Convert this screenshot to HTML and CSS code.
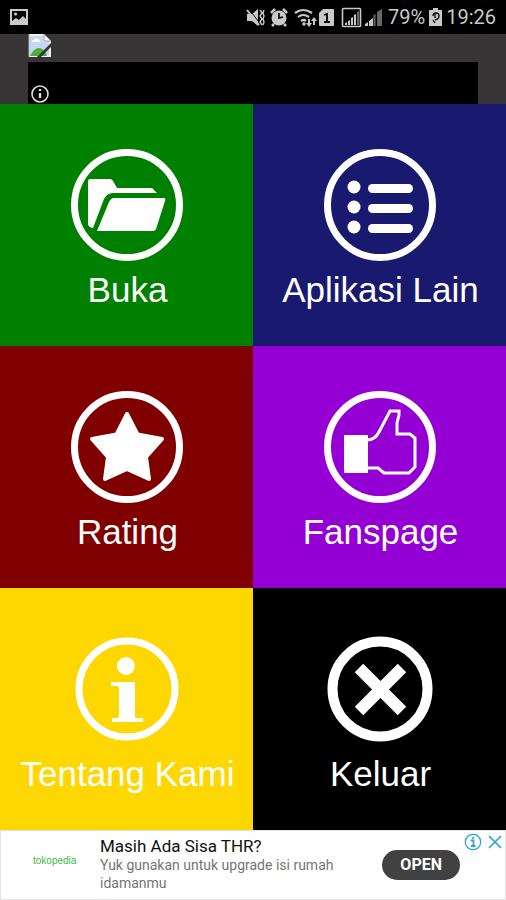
FILE: index.html
```html
<!DOCTYPE html>
<html lang="id">
<head>
<meta charset="utf-8">
<meta name="viewport" content="width=device-width, initial-scale=1">
<title>Menu</title>
<link rel="stylesheet" href="styles.css">
</head>
<body>
<div class="status">
  <svg class="status-photo" width="18" height="16" viewBox="0 0 18 16" aria-hidden="true">
    <rect x="1" y="1" width="16" height="14" fill="none" stroke="currentColor" stroke-width="2"/>
    <path d="M2 12l4-3 3 2 4-4 3 3v4H2z" fill="currentColor"/>
    <circle cx="5.500" cy="5" r="1.600" fill="currentColor"/>
  </svg>
  <div class="status-right">
    <svg width="138" height="34" viewBox="246 0 138 34" fill="currentColor" aria-hidden="true">
      <path d="M247 14h5l6-5v17l-6-5h-5z"/>
      <path d="M249 9l12 16" stroke="#000" stroke-width="1"/>
      <path d="M247 10l12 15" fill="none" stroke="currentColor" stroke-width="2"/>
      <path d="M260 10l2 3-2 3 2 3-2 3 2 3M264 10l-1 3 1 3-1 3 1 3-1 3" fill="none" stroke="currentColor" stroke-width="1.400"/>
      <circle cx="279" cy="18" r="7.500"/>
      <path d="M271 13l4-4M287 13l-4-4M274 24l-2 2M284 24l2 2" stroke="currentColor" stroke-width="2.500"/>
      <path d="M279 13v5l4-1" fill="none" stroke="#000" stroke-width="1.600"/>
      <g fill="none" stroke="currentColor" stroke-width="2.200">
        <path d="M295 13q8-6 17 0M298 17q5-4 11 0M301 21q3-2 5 0"/>
      </g>
      <circle cx="304" cy="24" r="1.800"/>
      <path d="M308 19h2v4h2l-3 4-3-4h2zM314 17l3 4h-2v4h-2v-4h-2z"/>
      <path d="M323 9h10q1 0 1 1v15q0 1-1 1h-13q-1 0-1-1V13z"/>
      <path d="M324 15l3-1v8M324 22h6" fill="none" stroke="#000" stroke-width="1.800"/>
      <rect x="342.500" y="8.500" width="18" height="18" rx="1" fill="none" stroke="currentColor" stroke-width="1.600"/>
      <path d="M345 23l2-1v3h-2zM348 21l2-1v5h-2zM351 18l2-1v8h-2zM354 15l2-1v11h-2z"/>
      <path d="M357 12l2-1v14h-2zM377 12l5-3v17h-5z" fill="#666"/>
      <path d="M365 24l3-2v4h-3zM369 21l4-3v8h-4z"/>
      <path d="M373.500 15l2-1v12h-2z" fill="#666"/>
    </svg>
    <span class="battery-text">79%</span>
    <svg class="battery" width="13" height="18" viewBox="0 0 13 18" aria-hidden="true">
      <path d="M4 0h5v2h4v16H0V2h4z" fill="currentColor"/>
      <path d="M4 8q0-3 3-3t3 3-4 4M4 12l2 3M6 6v4" fill="none" stroke="#000" stroke-width="1.300"/>
    </svg>
    <time class="clock">19:26</time>
  </div>
</div>

<header class="banner">
  <svg class="missing" width="24" height="23" viewBox="0 0 24 23" role="img" aria-label="Gambar">
    <path d="M1 0h15l7 7v16H1z" fill="#f1f1f1"/>
    <path d="M2 2h13v6h6v13H2z" fill="#c6d7f5"/>
    <path d="M4 8q0-2 2-2 1-3 3-1 3 0 3 3z" fill="#fff"/>
    <path d="M2 22q4-8 9-8t8 8z" fill="#4cae39"/>
    <path d="M16 0v7h7z" fill="#fff" stroke="#999"/>
    <path d="M24 8v4L13 23H9z" fill="#383536"/>
    <path d="M1 0v23" stroke="#aaa"/>
  </svg>
  <div class="slot">
    <svg width="18" height="18" viewBox="0 0 18 18" role="img" aria-label="Info">
      <circle cx="9" cy="9" r="8" fill="none" stroke="#ddd" stroke-width="1.600"/>
      <path d="M9 8v5M9 4v2" fill="none" stroke="#ddd" stroke-width="2.400"/>
    </svg>
  </div>
</header>

<main class="menu">
  <a class="tile tile-open" href="#buka">
    <svg class="icon" viewBox="0 0 112 112" aria-hidden="true">
      <circle class="ring" cx="56" cy="56" r="52.500"/>
      <path d="M19 30h20q2 0 3 2l4 7h34q2 0 3 2l3 3H42q-6 0-9 6L22 79q-5-1-5-4V33q0-3 2-3z"/>
      <path d="M43 49h50q2 0 1 3L85 80q-1 2-3 2H26l12-29q2-4 5-4z"/>
    </svg>
    <span class="label">Buka</span>
  </a>
  <a class="tile tile-apps" href="#aplikasi">
    <svg class="icon" viewBox="0 0 112 112" aria-hidden="true">
      <circle class="ring" cx="56" cy="56" r="52.500"/>
      <circle cx="30" cy="38" r="6.500"/><circle cx="30" cy="58" r="6.500"/><circle cx="30" cy="78" r="6.500"/>
      <rect x="44" y="35" width="45" height="9" rx="4.500"/>
      <rect x="44" y="55" width="45" height="9" rx="4.500"/>
      <rect x="44" y="75" width="45" height="9" rx="4.500"/>
    </svg>
    <span class="label">Aplikasi Lain</span>
  </a>
  <a class="tile tile-rating" href="#rating">
    <svg class="icon" viewBox="0 0 112 112" aria-hidden="true">
      <circle class="ring" cx="56" cy="56" r="52.500"/>
      <path d="M56 23l10.500 20.500L91 48 75 66l3 22-22-10-22 10 3-22-16-18 24.500-4.500z" stroke="currentColor" stroke-width="4" stroke-linejoin="round"/>
    </svg>
    <span class="label">Rating</span>
  </a>
  <a class="tile tile-fans" href="#fanspage">
    <svg class="icon" viewBox="0 0 112 112" aria-hidden="true">
      <circle class="ring" cx="56" cy="56" r="52.500"/>
      <path d="M20 44h24v38H20z"/>
      <path d="M43 49q8 0 12-8l11-21h9v4l-2 8v11h13l5 4v29l-6 6H60l-6-5H43" fill="none" stroke="currentColor" stroke-width="3"/>
    </svg>
    <span class="label">Fanspage</span>
  </a>
  <a class="tile tile-about" href="#tentang">
    <svg class="icon" viewBox="0 0 112 112" aria-hidden="true">
      <circle class="ring" cx="56" cy="56" r="48"/>
      <circle cx="55" cy="33" r="9"/>
      <path d="M40 49h24v35q0 1 2 1h6v4H41v-4h5q2 0 2-2V55q0-2-2-2h-6z"/>
    </svg>
    <span class="label">Tentang Kami</span>
  </a>
  <a class="tile tile-exit" href="#keluar">
    <svg class="icon" viewBox="0 0 112 112" aria-hidden="true">
      <circle class="ring ring-bold" cx="56" cy="56" r="47.500"/>
      <path d="M35 35l43 43M78 35L35 78" stroke="currentColor" stroke-width="12"/>
    </svg>
    <span class="label">Keluar</span>
  </a>
</main>

<aside class="ad">
  <span class="brand">tokopedia</span>
  <div class="copy">
    <h2 class="title">Masih Ada Sisa THR?</h2>
    <p class="text">Yuk gunakan untuk upgrade isi rumah idamanmu</p>
  </div>
  <button class="open" type="button">OPEN</button>
  <div class="controls">
    <button class="mini" type="button" aria-label="Info iklan">
      <svg width="18" height="18" viewBox="0 0 18 18" fill="none" stroke="currentColor">
        <circle cx="9" cy="9" r="7.700" stroke-width="1.300"/>
        <path d="M7 7.500h2.500V13M7 13h4.500M9 4v2" stroke-width="1.800"/>
      </svg>
    </button>
    <button class="mini" type="button" aria-label="Tutup iklan">
      <svg width="14" height="18" viewBox="0 0 14 18" fill="none" stroke="currentColor">
        <path d="M1 3l12 12M13 3L1 15" stroke-width="1.700"/>
      </svg>
    </button>
  </div>
</aside>
</body>
</html>
```

FILE: styles.css
```css
* {
  box-sizing: border-box;
}

body {
  margin: 0;
  min-height: 100vh;
  display: flex;
  flex-direction: column;
  background: #000;
  font-family: Roboto, "Liberation Sans", sans-serif;
}

svg {
  display: block;
}

.status {
  display: flex;
  align-items: center;
  justify-content: space-between;
  padding: 0 10px;
  background: #000;
  color: #c9c9c9;
}

.status-right {
  display: flex;
  align-items: center;
}

.battery-text,
.clock {
  font-size: 20px;
  line-height: 34px;
}

.battery-text {
  margin: 0 4px;
}

.clock {
  margin-left: 4px;
}

.banner {
  padding: 0 28px;
  background: #383536;
}

.slot {
  margin-top: 5px;
  padding: 23px 3px 1px;
  background: #000;
}

.menu {
  flex: 1;
  display: grid;
  grid-template-columns: 1fr 1fr;
  grid-auto-rows: 1fr;
}

.tile {
  display: flex;
  flex-direction: column;
  align-items: center;
  gap: 9px;
  padding: 45px 0 32px;
  color: #fff;
  text-decoration: none;
}

.tile-open { background: #008000; }
.tile-apps { background: #191970; }
.tile-rating { background: #800000; }
.tile-fans { background: #9400d3; }
.tile-about { background: #ffd700; }
.tile-exit { background: #000; }

.icon {
  width: 112px;
  height: 112px;
  fill: currentColor;
}

.ring {
  fill: none;
  stroke: currentColor;
  stroke-width: 7px;
}

.ring-bold {
  stroke-width: 10px;
}

.label {
  padding-left: 2px;
  font-family: "Liberation Sans", Arial, sans-serif;
  font-size: 35px;
  line-height: 40px;
  white-space: nowrap;
}

.ad {
  position: relative;
  display: flex;
  align-items: center;
  min-height: 70px;
  padding: 0 45px 0 32px;
  background: #fff;
  border: 1px solid #e4e4e4;
}

.brand {
  width: 67px;
  color: #42b549;
  font-family: "Liberation Sans", sans-serif;
  font-size: 10px;
  line-height: 20px;
  padding-bottom: 8px;
}

.copy {
  flex: 1;
  padding-bottom: 3px;
}

.title {
  margin: 0;
  color: #111;
  font-size: 17px;
  font-weight: 400;
  line-height: 20px;
}

.text {
  margin: 0;
  max-width: 250px;
  color: #757575;
  font-size: 14px;
  line-height: 18px;
}

.open {
  padding: 0 18px;
  border: 0;
  border-radius: 15px;
  background: #414141;
  color: #fff;
  font-family: inherit;
  font-size: 16px;
  font-weight: 700;
  line-height: 30px;
}

.controls {
  position: absolute;
  top: 2px;
  right: 3px;
  display: flex;
  gap: 6px;
}

.mini {
  padding: 0;
  border: 0;
  background: none;
  color: #25a9d4;
}
```
